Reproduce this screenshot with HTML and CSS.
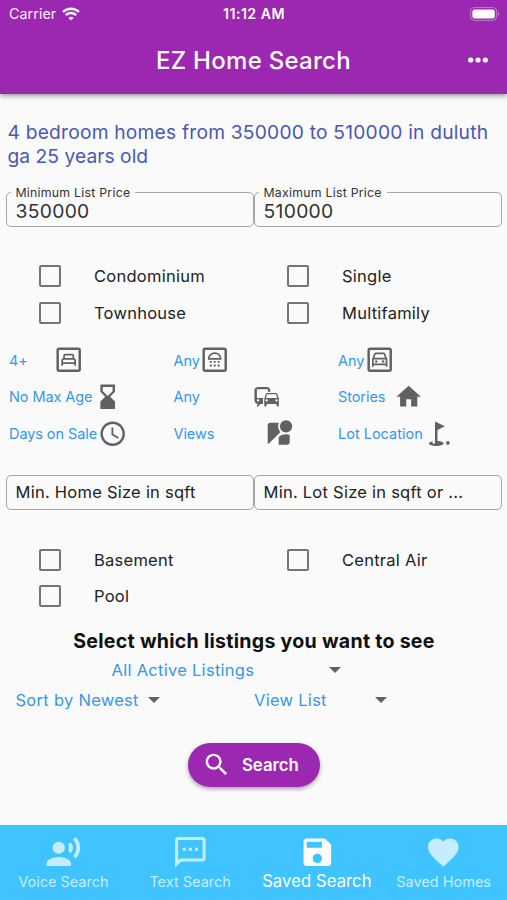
FILE: index.html
```html
<!DOCTYPE html>
<html lang="en">
<head>
<meta charset="utf-8">
<title>EZ Home Search</title>
<link rel="stylesheet" href="styles.css">
</head>
<body>
<div class="app">
  <header class="header">
    <div class="status">
      <div class="carrier"><span>Carrier</span>
        <svg class="wifi" viewBox="0 0 18 14"><path d="M9 13.6 6.4 11a3.8 3.8 0 0 1 5.2 0z"/><path class="arc" d="M3.8 8.1a7.5 7.5 0 0 1 10.4 0M1 5a11.6 11.6 0 0 1 16 0"/></svg>
      </div>
      <span class="time">11:12 AM</span>
      <svg class="battery" viewBox="0 0 30 14"><rect class="shell" x=".6" y=".6" width="26" height="12.8" rx="4"/><rect x="2.4" y="2.4" width="22.4" height="9.2" rx="2.3"/><path class="tip" d="M28 4.8q2 2.2 0 4.4z"/></svg>
    </div>
    <div class="title-row">
      <h1>EZ Home Search</h1>
      <svg class="more" viewBox="0 0 20 6"><circle cx="2.7" cy="3" r="2.6"/><circle cx="10" cy="3" r="2.6"/><circle cx="17.3" cy="3" r="2.6"/></svg>
    </div>
  </header>

  <main class="content">
    <p class="query">4 bedroom homes from 350000 to 510000 in duluth<br><span class="tail">ga 25 years old</span></p>

    <div class="fields prices">
      <fieldset class="field"><legend>Minimum List Price</legend><span>350000</span></fieldset>
      <fieldset class="field"><legend>Maximum List Price</legend><span>510000</span></fieldset>
    </div>

    <div class="checks">
      <label class="check"><i class="box"></i><span>Condominium</span></label>
      <label class="check"><i class="box"></i><span>Single</span></label>
      <label class="check"><i class="box"></i><span>Townhouse</span></label>
      <label class="check"><i class="box"></i><span>Multifamily</span></label>
    </div>

    <div class="picks">
      <div class="pick beds"><span>4+</span><svg class="icon" viewBox="0 0 24 24"><rect class="frame" x="3" y="3" width="18" height="18" rx="1.2"/><path class="line" d="M8.2 11V8.8q0-1 1-1h5.6q1 0 1 1V11M6.7 16.9v-4.1q0-1.5 1.5-1.5h7.6q1.5 0 1.5 1.5v4.1M6.7 14.8h10.6"/></svg></div>
      <div class="pick baths"><span>Any</span><svg class="icon" viewBox="0 0 24 24"><rect class="frame" x="3" y="3" width="18" height="18" rx="1.2"/><path class="line" d="M7.2 11.3v-.6a4.8 4.1 0 0 1 9.6 0v.6z"/><path d="M8 13h1.6v1.5H8zm3.2 0h1.6v1.5h-1.6zm3.2 0H16v1.5h-1.6zM8 16h1.6v1.5H8zm3.2 0h1.6v1.5h-1.6zm3.2 0H16v1.5h-1.6z"/></svg></div>
      <div class="pick garage"><span>Any</span><svg class="icon" viewBox="0 0 24 24"><rect class="frame" x="3" y="3" width="18" height="18" rx="1.2"/><path class="line" d="M6.4 17.8v-6L8 7.6q.2-.7 1-.7h6q.8 0 1 .7l1.6 4.2v6M6.4 11.2h11.2M6.4 15.9h11.2"/><circle cx="9.2" cy="13.5" r="1"/><circle cx="14.8" cy="13.5" r="1"/></svg></div>
      <div class="pick age"><span>No Max Age</span><svg class="icon" viewBox="0 0 24 24"><path d="M18 22l-.01-6L14 12l3.99-4.01L18 2H6v6l4 4-4 3.99V22h12zM8 7.5V4h8v3.5l-4 4-4-4z"/></svg></div>
      <div class="pick commute"><span>Any</span><svg class="icon" viewBox="0 0 24 24"><path d="M12 4H5C3.34 4 2 5.34 2 7v8c0 1.66 1.34 3 3 3l-1 1v1h1l2-2.03L9 18v-5H4V5.98L13 6v2h2V7c0-1.66-1.34-3-3-3zM5 14c.55 0 1 .45 1 1s-.45 1-1 1-1-.45-1-1 .45-1 1-1zm15.57-4.34c-.14-.4-.52-.66-.97-.66h-7.19c-.46 0-.83.26-.98.66L10 13.77l.01 5.51c0 .38.31.72.69.72h.62c.38 0 .68-.38.68-.76V18h8v1.24c0 .38.31.76.69.76h.61c.38 0 .69-.34.69-.72l.01-1.37v-4.14l-1.43-4.11zm-8.16.34h7.19l1.03 3h-9.25l1.03-3zM12 16c-.55 0-1-.45-1-1s.45-1 1-1 1 .45 1 1-.45 1-1 1zm8 0c-.55 0-1-.45-1-1s.45-1 1-1 1 .45 1 1-.45 1-1 1z"/></svg></div>
      <div class="pick stories"><span>Stories</span><svg class="icon" viewBox="0 0 24 24"><path d="M10 20v-6h4v6h5v-8h3L12 3 2 12h3v8z"/></svg></div>
      <div class="pick days"><span>Days on Sale</span><svg class="icon" viewBox="0 0 24 24"><path d="M11.99 2C6.47 2 2 6.48 2 12s4.47 10 9.99 10C17.52 22 22 17.52 22 12S17.52 2 11.99 2zM12 20c-4.42 0-8-3.58-8-8s3.58-8 8-8 8 3.58 8 8-3.58 8-8 8zm.5-13H11v6l5.25 3.15.75-1.23-4.5-2.67z"/></svg></div>
      <div class="pick views"><span>Views</span><svg class="icon" viewBox="0 0 24 24"><path d="M12.56 14.33c-.34.27-.56.7-.56 1.17V21h7c1.1 0 2-.9 2-2v-5.98c-.94-.33-1.95-.52-3-.52-2.03 0-3.93.7-5.44 1.83zM11.5 6c0-1.08.27-2.1.74-3H5c-1.1 0-2 .9-2 2v14c0 .55.23 1.05.59 1.41l9.82-9.82C12.23 9.42 11.5 7.8 11.5 6z"/><circle cx="18" cy="6" r="5"/></svg></div>
      <div class="pick lot"><span>Lot Location</span><svg class="icon" viewBox="0 0 24 24"><circle cx="19.5" cy="19.5" r="1.5"/><path d="M17 5.92L9 2v18H7v-1.73c-1.79.35-3 .99-3 1.73 0 1.1 2.69 2 6 2s6-.9 6-2c0-.99-2.16-1.81-5-1.97V8.98l6-3.06z"/></svg></div>
    </div>

    <div class="fields sizes">
      <div class="field plain"><span>Min. Home Size in sqft</span></div>
      <div class="field plain"><span>Min. Lot Size in sqft or ...</span></div>
    </div>

    <div class="checks extras">
      <label class="check"><i class="box"></i><span>Basement</span></label>
      <label class="check"><i class="box"></i><span>Central Air</span></label>
      <label class="check"><i class="box"></i><span>Pool</span></label>
    </div>

    <h2>Select which listings you want to see</h2>
    <div class="select active"><span>All Active Listings</span><i class="caret"></i></div>
    <div class="select-row">
      <div class="select sort"><span>Sort by Newest</span><i class="caret"></i></div>
      <div class="select view"><span>View List</span><i class="caret"></i></div>
    </div>

    <button class="search"><svg class="icon" viewBox="0 0 24 24"><path d="M15.5 14h-.79l-.28-.27C15.41 12.59 16 11.11 16 9.5 16 5.91 13.09 3 9.5 3S3 5.91 3 9.5 5.91 16 9.5 16c1.61 0 3.09-.59 4.23-1.57l.27.28v.79l5 4.99L20.49 19l-4.99-5zm-6 0C7.01 14 5 11.99 5 9.5S7.01 5 9.5 5 14 7.01 14 9.5 11.99 14 9.5 14z"/></svg><span>Search</span></button>
  </main>

  <nav class="tabs">
    <div class="tab"><svg viewBox="0 0 24 24"><circle cx="9" cy="9" r="4"/><path d="M9 15c-2.67 0-8 1.34-8 4v2h16v-2c0-2.66-5.33-4-8-4zm7.76-9.64l-1.68 1.69c.84 1.18.84 2.71 0 3.89l1.68 1.69c2.02-2.02 2.02-5.07 0-7.27zM20.07 2l-1.63 1.63c2.77 3.02 2.77 7.56 0 10.74L20.07 16c3.9-3.89 3.91-9.95 0-14z"/></svg><span>Voice Search</span></div>
    <div class="tab"><svg viewBox="0 0 24 24"><path d="M20 2H4c-1.1 0-2 .9-2 2v18l4-4h14c1.1 0 2-.9 2-2V4c0-1.1-.9-2-2-2zm0 14H5.17L4 17.17V4h16v12zM7 9h2v2H7zm4 0h2v2h-2zm4 0h2v2h-2z"/></svg><span>Text Search</span></div>
    <div class="tab selected"><svg viewBox="0 0 24 24"><path d="M17 3H5c-1.11 0-2 .9-2 2v14c0 1.1.89 2 2 2h14c1.1 0 2-.9 2-2V7l-4-4zm-5 16c-1.66 0-3-1.34-3-3s1.34-3 3-3 3 1.34 3 3-1.34 3-3 3zm3-10H5V5h10v4z"/></svg><span>Saved Search</span></div>
    <div class="tab"><svg viewBox="0 0 24 24"><path d="M12 21.35l-1.45-1.32C5.4 15.36 2 12.28 2 8.5 2 5.42 4.42 3 7.5 3c1.74 0 3.41.81 4.5 2.09C13.09 3.81 14.76 3 16.5 3 19.58 3 22 5.42 22 8.5c0 3.78-3.4 6.86-8.55 11.54L12 21.35z"/></svg><span>Saved Homes</span></div>
  </nav>
</div>
</body>
</html>
```
FILE: styles.css
```css
* { box-sizing: border-box; }
body {
  margin: 0;
  font-family: Inter, "Liberation Sans", sans-serif;
  font-size: 16.5px;
  color: #222;
  background: #fafafa;
}
h1, h2, p { margin: 0; }
span, h1, h2, p, legend { white-space: nowrap; }
svg { display: block; flex: none; fill: currentColor; }
.app { display: flex; flex-direction: column; width: 507px; height: 900px; overflow: hidden; }

.header {
  flex: none;
  height: 94px;
  background: #9c27b0;
  color: #fff;
  box-shadow: 0 2px 5px rgba(0, 0, 0, .38);
}
.status {
  display: grid;
  grid-template-columns: 1fr auto 1fr;
  align-items: center;
  height: 27px;
  padding: 0 7px 0 9px;
}
.carrier { display: flex; align-items: center; gap: 6px; font-size: 14.3px; letter-spacing: .05px; opacity: .93; }
.wifi { width: 18px; height: 14px; }
.arc { fill: none; stroke: currentColor; stroke-width: 2.4; }
.time { margin-right: 1px; font-size: 14.2px; font-weight: 600; letter-spacing: .45px; }
.battery { width: 30px; height: 14px; justify-self: end; }
.shell { fill: none; stroke: currentColor; opacity: .4; }
.tip { opacity: .5; }
.title-row {
  display: grid;
  grid-template-columns: 1fr auto 1fr;
  align-items: center;
  height: 66px;
  padding-right: 19px;
  padding-left: 19px;
}
h1 { grid-column: 2; font-size: 24px; font-weight: 500; letter-spacing: .28px; }
.more { width: 20px; height: 6px; justify-self: end; }

.content { flex: 1; padding: 27px 5px 0 6px; }
.query { padding-left: 1.5px; color: #4b57b5; font-size: 19.2px; line-height: 23.5px; letter-spacing: .22px; }
.tail { letter-spacing: .05px; }

.fields { display: flex; }
.field {
  width: 248px;
  height: 35px;
  min-width: 0;
  margin: 0;
  padding: 0 8.5px;
  border: 1.5px solid #a6a6a6;
  border-radius: 5px;
}
.prices { margin-top: 17px; }
.prices .field { height: 42px; }
legend { height: 15px; margin-left: -5px; padding: 0 5px; font-size: 12.3px; line-height: 15px; letter-spacing: .25px; color: #333; }
.prices .field span { display: block; font-size: 19.3px; line-height: 22px; letter-spacing: .3px; color: #333; }
.plain { display: flex; align-items: center; font-size: 16.5px; line-height: 20px; letter-spacing: .25px; padding-bottom: 1px; }

.checks { display: grid; grid-template-columns: 248px 248px; grid-auto-rows: 36.7px; margin-top: 31px; }
.check { display: flex; align-items: center; gap: 33px; padding-left: 33px; letter-spacing: .25px; }
.box { width: 22px; height: 22px; border: 2.4px solid #757575; border-radius: 2px; }

.picks {
  display: grid;
  grid-template-columns: repeat(3, 164.5px);
  grid-auto-rows: 36.7px;
  margin: 10.3px 0 0 3px;
  color: #3498ea;
  font-size: 14.5px;
  letter-spacing: -.08px;
}
.pick { display: flex; align-items: center; }
.icon { width: 29.4px; height: 29.4px; }
.pick .icon { color: #616161; }
.frame, .line { fill: none; stroke: currentColor; stroke-width: 2; }
.line { stroke-width: 1.4; }
.beds span { width: 45px; }
.baths span { width: 26.7px; }
.garage span { width: 26.9px; }
.age span { width: 84px; }
.commute span { width: 78px; }
.stories span { width: 56px; }
.days span { width: 88.8px; }
.views span { width: 90px; }
.lot span { width: 85.5px; letter-spacing: 0; }

.sizes { margin-top: 23.7px; }
.extras { margin-top: 31px; }
h2 { margin-top: 14px; text-align: center; font-size: 19.6px; line-height: 24px; font-weight: 700; letter-spacing: .26px; color: #111; }
.select { display: flex; align-items: center; justify-content: space-between; height: 29.4px; color: #3498ea; letter-spacing: .28px; }
.caret { border: 6px solid transparent; border-top-color: #616161; border-bottom: 0; }
.active { width: 229.5px; margin: 3px 0 0 105.5px; }
.select-row { display: flex; margin-left: 9.5px; }
.sort { width: 144px; margin-right: 94.5px; }
.view { width: 133px; }
.search {
  display: flex;
  align-items: center;
  gap: 10.5px;
  width: 132px;
  height: 44px;
  margin: 28px auto 0;
  padding: 0 14px;
  border: 0;
  border-radius: 22px;
  background: #9c27b0;
  color: #fff;
  font: 600 16.8px Inter, "Liberation Sans", sans-serif;
  box-shadow: 0 2px 4px rgba(0, 0, 0, .35);
}

.tabs { flex: none; display: grid; grid-template-columns: repeat(4, 1fr); height: 75px; background: #40c4ff; color: #fff; }
.tab { display: flex; flex-direction: column; align-items: center; padding-top: 8.5px; font-size: 14.5px; line-height: 20px; letter-spacing: 0; color: #c5ecff; }
.tab svg { width: 36.7px; height: 36.7px; }
.tab span { margin-top: 2px; }
.tab.selected { color: #fff; font-size: 16.6px; letter-spacing: .1px; }
.tab.selected span { margin-top: 1px; }
```
